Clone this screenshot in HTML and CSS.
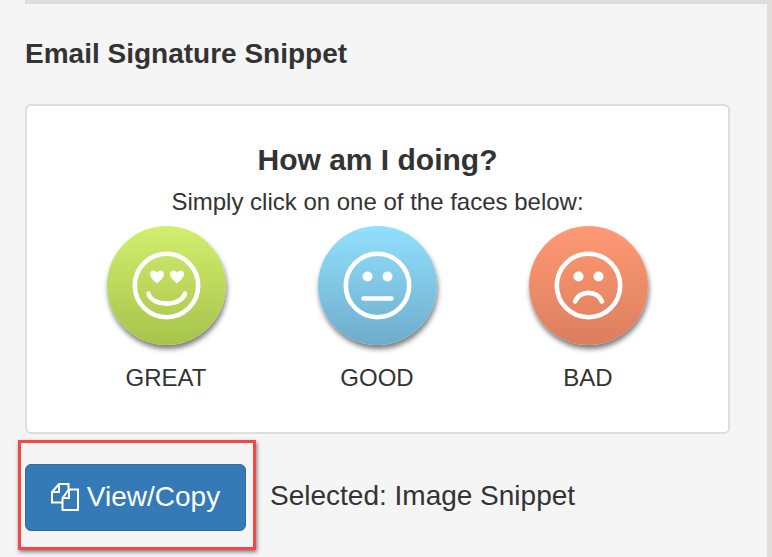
FILE: index.html
```html
<!DOCTYPE html>
<html lang="en">
<head>
<meta charset="utf-8">
<title>Email Signature Snippet</title>
<link rel="stylesheet" href="styles.css">
</head>
<body>
<main class="panel">
  <h1 class="title">Email Signature Snippet</h1>
  <section class="card">
    <h2 class="card-title">How am I doing?</h2>
    <p class="card-sub">Simply click on one of the faces below:</p>
    <div class="faces">
      <div class="face">
        <div class="disc disc-great">
          <svg class="face-icon" viewBox="0 0 119 119" aria-hidden="true">
            <circle class="line" cx="59.5" cy="59.5" r="31.7"/>
            <path class="fill" d="M50 57.5 C46.5 54.5 43 51.5 43 48 C43 44 48 43 50 46.8 C52 43 57 44 57 48 C57 51.5 53.5 54.5 50 57.5Z"/>
            <path class="fill" d="M70 57.5 C66.5 54.5 63 51.5 63 48 C63 44 68 43 70 46.8 C72 43 77 44 77 48 C77 51.5 73.5 54.5 70 57.5Z"/>
            <path class="line round" d="M41.5 67.5 C45 81 74 81 78 67.5"/>
          </svg>
        </div>
        <span class="face-label">GREAT</span>
      </div>
      <div class="face">
        <div class="disc disc-good">
          <svg class="face-icon" viewBox="0 0 119 119" aria-hidden="true">
            <circle class="line" cx="59.5" cy="59.5" r="31.7"/>
            <circle class="fill" cx="49.5" cy="50.5" r="5"/>
            <circle class="fill" cx="69.5" cy="50.5" r="5"/>
            <path class="line round" d="M45.5 72.5 H73.5"/>
          </svg>
        </div>
        <span class="face-label">GOOD</span>
      </div>
      <div class="face">
        <div class="disc disc-bad">
          <svg class="face-icon" viewBox="0 0 119 119" aria-hidden="true">
            <circle class="line" cx="59.5" cy="59.5" r="31.7"/>
            <circle class="fill" cx="49.5" cy="50.5" r="5"/>
            <circle class="fill" cx="69.5" cy="50.5" r="5"/>
            <path class="line round" d="M46 75.5 C51 64 68 64 73 75.5"/>
          </svg>
        </div>
        <span class="face-label">BAD</span>
      </div>
    </div>
  </section>
  <div class="actions">
    <div class="highlight"></div>
    <button class="btn" type="button">
      <svg class="btn-icon" viewBox="0 0 28 28" aria-hidden="true">
        <path d="M11.5 19.5 H1 V9 L8 1 H17.5 V6.5"/>
        <path d="M8 1 V9 H1"/>
        <path d="M11.5 27 V15 L18 6.5 H27 V27 Z"/>
        <path d="M18 6.5 V15 H11.5"/>
      </svg>
      <span class="btn-text">View/Copy</span>
    </button>
    <span class="selected">Selected: Image Snippet</span>
  </div>
</main>
</body>
</html>
```
FILE: styles.css
```css
* { box-sizing: border-box; }
html, body { margin: 0; height: 100%; }
body {
  background: #f5f5f5;
  color: #333;
  font-family: "Liberation Sans", Arial, sans-serif;
  overflow: hidden;
}
.panel {
  margin-left: 25px;
  height: 557px;
  border-top: 4px solid #e0dcdc;
  border-right: 5px solid #e0dcdc;
}
.title {
  margin: 0;
  padding-top: 35px;
  font-size: 28px;
  line-height: 30px;
  font-weight: 700;
}
.card {
  margin-top: 35px;
  width: 705px;
  height: 330px;
  padding-top: 36px;
  background: #fff;
  border: 2px solid #ddd;
  border-radius: 6px;
  display: flex;
  flex-direction: column;
  align-items: center;
}
.card-title {
  margin: 0;
  font-size: 30px;
  line-height: 36px;
  font-weight: 700;
}
.card-sub {
  margin: 10px 0 0;
  font-size: 24px;
  line-height: 28px;
}
.faces {
  display: flex;
  margin-top: 10px;
}
.face {
  width: 211px;
  display: flex;
  flex-direction: column;
  align-items: center;
}
.disc {
  width: 119px;
  height: 119px;
  border-radius: 50%;
  box-shadow: 1px 4px 5px rgba(40, 40, 40, 0.6);
}
.disc-great { background: linear-gradient(#d2ee6e, #a6c44b); }
.disc-good { background: linear-gradient(#92e0fe, #6eaccb); }
.disc-bad { background: linear-gradient(#ff9a74, #db7e5e); }
.face-icon { display: block; width: 119px; height: 119px; }
.line { fill: none; stroke: #fff; stroke-width: 4.6; }
.round { stroke-linecap: round; }
.fill { fill: #fff; }
.face-label {
  margin-top: 19px;
  padding-right: 1px;
  font-size: 24px;
  line-height: 28px;
}
.actions {
  position: relative;
  margin-top: 30px;
  display: flex;
  align-items: center;
  gap: 24px;
}
.highlight {
  position: absolute;
  left: -7px;
  top: -24px;
  width: 238px;
  height: 110px;
  border: 3px solid #f44848;
  box-shadow: 1px 2px 4px rgba(0, 0, 0, 0.5);
  pointer-events: none;
}
.btn {
  width: 221px;
  height: 67px;
  padding: 0;
  background: #337ab7;
  border: 1px solid #2e6da4;
  border-radius: 6px;
  color: #fff;
  font-family: inherit;
  font-size: 28px;
  display: flex;
  align-items: center;
  justify-content: center;
  gap: 8px;
}
.btn-text { padding-bottom: 2px; }
.btn-icon {
  width: 28px;
  height: 28px;
  margin-bottom: 2px;
  fill: none;
  stroke: #fff;
  stroke-width: 2;
  stroke-linejoin: miter;
}
.selected { font-size: 28px; line-height: 30px; padding-bottom: 3px; }
```
